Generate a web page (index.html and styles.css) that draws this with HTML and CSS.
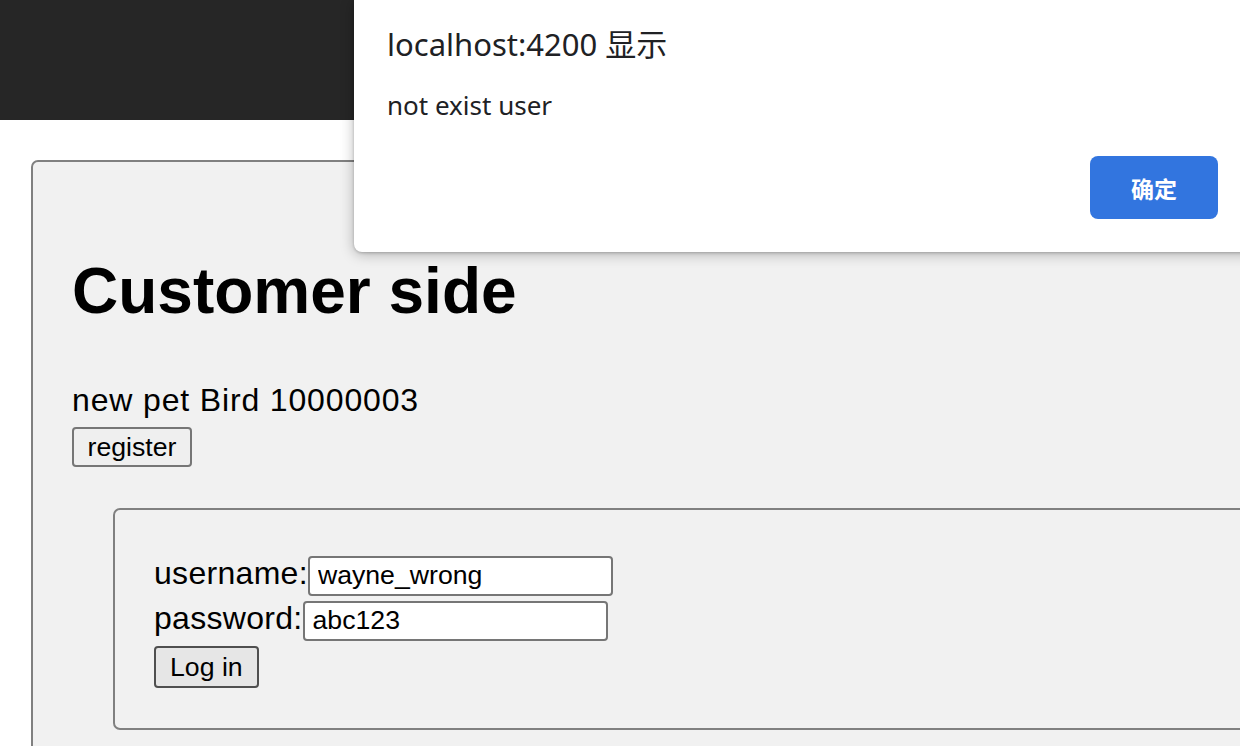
FILE: index.html
```html
<!DOCTYPE html>
<html lang="en">
<head>
<meta charset="utf-8">
<title>Customer side</title>
<link rel="stylesheet" href="styles.css">
</head>
<body>
<header class="topbar"></header>
<main class="page">
  <section class="card">
    <h1 class="title">Customer side</h1>
    <div class="pet">new pet Bird 10000003</div>
    <div class="btn-row"><button class="btn">register</button></div>
    <form class="login-card">
      <div class="field"><label>username:</label><input class="input" type="text" value="wayne_wrong"></div>
      <div class="field"><label>password:</label><input class="input" type="text" value="abc123"></div>
      <div class="btn-row login-row"><button type="button" class="btn btn-login">Log in</button></div>
    </form>
  </section>
</main>
<div class="alert" role="dialog">
  <div class="alert-title">localhost:4200 显示</div>
  <div class="alert-msg">not exist user</div>
  <div class="alert-actions"><button class="alert-ok">确定</button></div>
</div>
</body>
</html>
```
FILE: styles.css
```css
html, body {
  margin: 0;
  padding: 0;
}
body {
  width: 1240px;
  height: 746px;
  overflow: hidden;
  background: #ffffff;
  font-family: "Liberation Sans", Arial, sans-serif;
  color: #000;
  position: relative;
}
.topbar {
  height: 120px;
  background: #262626;
}
.page {
  padding: 40px 0 0 31px;
}
.card {
  width: 1300px;
  min-height: 700px;
  border: 2px solid #808080;
  border-radius: 7px;
  background: #f1f1f1;
  padding: 0 0 0 39px;
}
.title {
  margin: 92px 0 0;
  font-size: 64px;
  line-height: 74px;
  font-weight: bold;
}
.pet {
  margin-top: 54px;
  font-size: 32px;
  line-height: 37px;
  letter-spacing: 0.85px;
}
.btn-row {
  margin-top: 8px;
  display: flex;
}
.btn {
  font-family: "Liberation Sans", Arial, sans-serif;
  font-size: 26.67px;
  height: 40px;
  padding: 0 13.5px;
  border: 2px solid #767676;
  border-radius: 4px;
  background: #efefef;
  color: #000;
}
.login-card {
  margin: 41px 0 0 41px;
  width: 1200px;
  border: 2px solid #808080;
  border-radius: 7px;
  padding: 45px 0 40px 39px;
}
.field {
  display: flex;
  align-items: baseline;
  font-size: 32px;
  line-height: 37px;
  height: 40px;
}
.field label {
  letter-spacing: 0.3px;
}
.field + .field {
  margin-top: 5px;
}
.input {
  width: 305px;
  height: 40px;
  box-sizing: border-box;
  border: 2px solid #767676;
  border-radius: 4px;
  padding: 0 8px;
  font-family: "Liberation Sans", Arial, sans-serif;
  font-size: 26.67px;
  background: #fff;
  color: #000;
}
.login-row {
  margin-top: 6px;
}
.btn-login {
  height: 42px;
  padding: 0 14px;
  border-color: #4f4f4f;
  background: #e6e6e6;
}
.alert {
  position: absolute;
  top: 0;
  left: 354px;
  width: 918px;
  height: 252px;
  box-sizing: border-box;
  padding: 24px 54px 0 33px;
  background: #ffffff;
  border-bottom-left-radius: 8px;
  box-shadow: 0 2px 14px rgba(0, 0, 0, 0.28), 0 1px 3px rgba(0, 0, 0, 0.2);
  font-family: "Noto Sans", "Noto Sans CJK SC", sans-serif;
  color: #202124;
}
.alert-title {
  font-size: 31px;
  line-height: 40px;
}
.alert-msg {
  margin-top: 24px;
  font-size: 26px;
  line-height: 34px;
}
.alert-actions {
  margin-top: 34px;
  display: flex;
  justify-content: flex-end;
}
.alert-ok {
  width: 128px;
  height: 63px;
  border: none;
  border-radius: 8px;
  background: #3275df;
  color: #fff;
  font-family: "Noto Sans CJK SC", sans-serif;
  font-weight: bold;
  font-size: 23px;
}
```
